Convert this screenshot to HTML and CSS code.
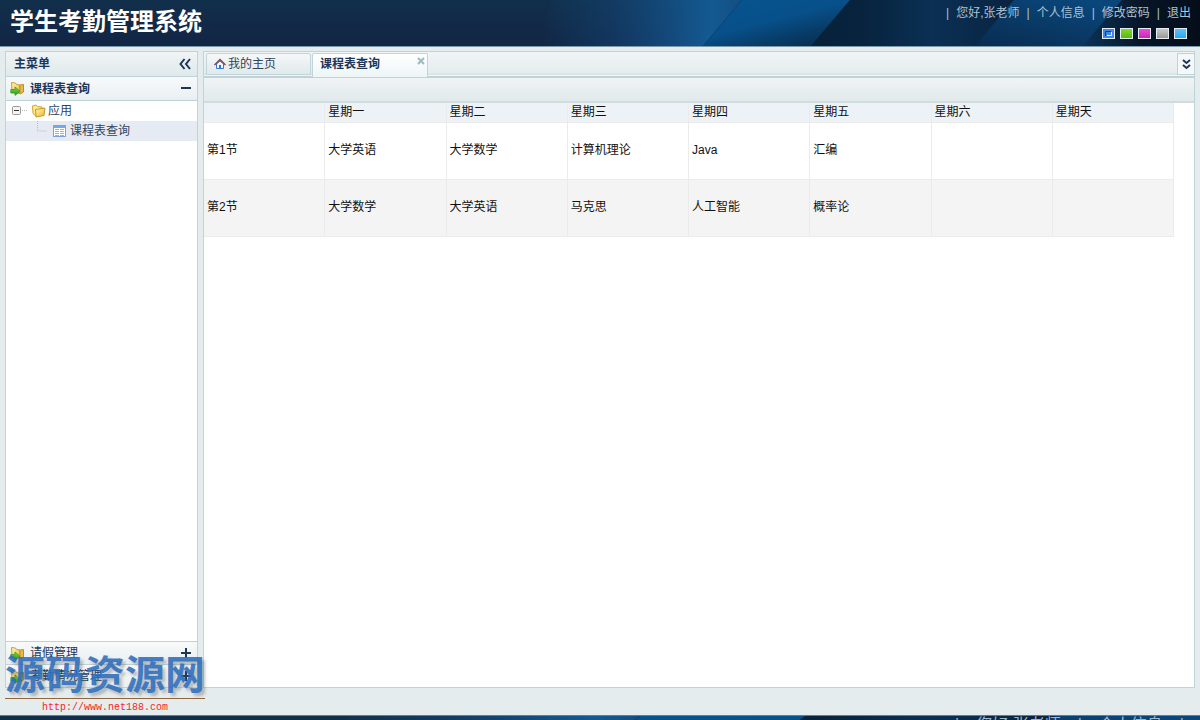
FILE: index.html
```html
<!DOCTYPE html>
<html lang="zh-CN">
<head>
<meta charset="utf-8">
<title>学生考勤管理系统</title>
<link rel="stylesheet" href="styles.css">
</head>
<body>
<svg class="defs" aria-hidden="true">
  <defs>
    <linearGradient id="base" x1="0" y1="0" x2="0" y2="1"><stop offset="0" stop-color="#112f4b"/><stop offset="1" stop-color="#122544"/></linearGradient>
    <linearGradient id="glow"><stop offset="0" stop-color="#14598f" stop-opacity="0"/><stop offset=".35" stop-color="#14508a" stop-opacity=".35"/><stop offset=".85" stop-color="#145a92"/><stop offset="1" stop-color="#124e82"/></linearGradient>
    <linearGradient id="blue" x1="0" y1="0" x2=".8" y2="1"><stop offset="0" stop-color="#075490"/><stop offset=".5" stop-color="#07508a"/><stop offset="1" stop-color="#082c4c"/></linearGradient>
    <linearGradient id="dark"><stop offset="0" stop-color="#07213a"/><stop offset=".25" stop-color="#08233e"/><stop offset=".6" stop-color="#0a3054"/><stop offset="1" stop-color="#0a2340"/></linearGradient>
    <linearGradient id="mid" x1="0" y1="1" x2=".7" y2="0"><stop offset="0" stop-color="#092c50"/><stop offset="1" stop-color="#0a467a"/></linearGradient>
    <linearGradient id="night"><stop offset="0" stop-color="#0a3357"/><stop offset=".5" stop-color="#071527"/><stop offset="1" stop-color="#050d1a"/></linearGradient>
    <linearGradient id="fold" x1="0" x2="1" y2="1"><stop offset="0" stop-color="#fff7b5"/><stop offset="1" stop-color="#e9b72f"/></linearGradient>
    <linearGradient id="arrow" x1="0" x2="0" y2="1"><stop offset="0" stop-color="#7fdc45"/><stop offset="1" stop-color="#229516"/></linearGradient>
    <g id="banner">
      <rect width="1200" height="46" fill="url(#base)"/>
      <path d="M550 0H742L703 46H540Z" fill="url(#glow)"/>
      <path d="M742 0H850L811 46H703Z" fill="url(#blue)"/>
      <path d="M850 0H1014L975 46H811Z" fill="url(#dark)"/>
      <path d="M1014 0H1122L1083 46H975Z" fill="url(#mid)"/>
      <path d="M1122 0H1200V46H1083Z" fill="url(#night)"/>
      <path d="M742 0L703 46" stroke="#0f4473" stroke-width="1"/>
    </g>
    <g id="module">
      <path d="M1.500 1.500l4 .5 1 1.500 3.500.5v8.500l-8-1z" fill="url(#fold)" stroke="#c9a040"/>
      <path d="M10 4l3.500-.5v7.500l-3.500 2z" fill="#e8bb48" stroke="#c08d24"/>
      <path d="M.8 8.500h4.200V6l5 4.200-5 4.200V12H.8z" fill="url(#arrow)" stroke="#3b9a2a" stroke-width=".8"/>
    </g>
  </defs>
</svg>

<header class="header">
  <svg class="banner" viewBox="0 0 1200 46" preserveAspectRatio="none" aria-hidden="true"><use href="#banner"/></svg>
  <h1 class="title">学生考勤管理系统</h1>
  <div class="tools">
    <nav class="links"><i>|</i><span>您好,张老师</span><i>|</i><a href="#info">个人信息</a><i>|</i><a href="#password">修改密码</a><i>|</i><a href="#logout">退出</a></nav>
    <div class="skins">
      <button class="skin blue" aria-label="蓝色"><svg width="11" height="9"><path d="M2.500 7V2.500H8" fill="none" stroke="#143a70"/><path d="M4 6.500h4.500V3" fill="none" stroke="#e6f2ff"/></svg></button><button class="skin green" aria-label="绿色"></button><button class="skin pink" aria-label="粉色"></button><button class="skin gray" aria-label="灰色"></button><button class="skin sky" aria-label="天蓝"></button>
    </div>
  </div>
</header>

<main class="layout">
  <aside class="side">
    <div class="side-head"><span>主菜单</span>
      <button class="plain" aria-label="收起"><svg width="12" height="12" viewBox="0 0 12 12"><path d="M5.500 1L1.500 6l4 5M11 1L7 6l4 5" class="ink"/></svg></button></div>
    <button class="module"><svg width="15" height="15"><use href="#module"/></svg><span>课程表查询</span><svg width="11" height="11"><path d="M0 5h10" class="ink"/></svg></button>
    <div class="tree">
      <div class="node">
        <svg width="20" height="20"><rect x="1.500" y="5.500" width="8" height="8" rx="1" fill="#f4f4f4" stroke="#9a9a9a"/><path d="M3 9.500h5" stroke="#333"/><path d="M11 9.500h5" stroke="#bbb" stroke-dasharray="1 1"/></svg>
        <svg width="16" height="16"><path d="M1.500 3l3.500-1 1.500 1.500 4.500 .5v8l-6 1-3-2.500z" fill="#fbeb8c" stroke="#cfa53a"/><path d="M4.500 6.500l9.500-1.500-1 7.500-8 1.500z" fill="url(#fold)" stroke="#cb9628"/></svg>
        <span>应用</span>
      </div>
      <div class="node leaf">
        <svg width="16" height="20"><path d="M5.500 0v10h9" fill="none" stroke="#bbb" stroke-dasharray="1 1"/></svg>
        <svg width="14" height="13"><rect x=".5" y=".5" width="12" height="11" fill="#fff" stroke="#7aa3df"/><path d="M1 2h11" stroke="#79a8ea" stroke-width="2"/><path d="M2 4.500h4m1 0h4M2 6.500h4m1 0h4M2 8.500h4m1 0h4M2 10.500h4m1 0h4" stroke="#8db5ea"/></svg>
        <a href="#schedule">课程表查询</a>
      </div>
    </div>
    <button class="module low"><svg width="15" height="15"><use href="#module"/></svg><span>请假管理</span><svg width="11" height="11"><path d="M0 5h10M5 0v10" class="ink"/></svg></button>
    <button class="module low"><svg width="15" height="15"><use href="#module"/></svg><span>考勤情况管理</span><svg width="11" height="11"><path d="M0 5h10M5 0v10" class="ink"/></svg></button>
  </aside>

  <section class="content">
    <div class="tabs">
      <button class="tab home"><svg width="12" height="12"><path d="M2.500 6v4.500h7V6L6 3z" fill="#eef5ff" stroke="#3a76ca"/><path d="M.5 7L6 1.500 11.500 7" fill="none" stroke="#7d4048" stroke-width="1.300"/><path d="M5 7h2v4H5z" fill="#2f74d8"/></svg><span>我的主页</span></button>
      <div class="tab active"><span>课程表查询</span><button class="plain close" aria-label="关闭"><svg width="8" height="8"><path d="M1 1l6 6M7 1L1 7" stroke="#9bbac2" stroke-width="2"/></svg></button></div>
      <button class="more" aria-label="更多"><svg width="9" height="11"><path d="M1 1l3.500 3L8 1M1 6l3.500 3L8 6" class="ink"/></svg></button>
    </div>
    <div class="toolbar"></div>
    <table class="grid">
      <thead><tr><th></th><th>星期一</th><th>星期二</th><th>星期三</th><th>星期四</th><th>星期五</th><th>星期六</th><th>星期天</th></tr></thead>
      <tbody>
        <tr><td>第1节</td><td>大学英语</td><td>大学数学</td><td>计算机理论</td><td>Java</td><td>汇编</td><td></td><td></td></tr>
        <tr><td>第2节</td><td>大学数学</td><td>大学英语</td><td>马克思</td><td>人工智能</td><td>概率论</td><td></td><td></td></tr>
      </tbody>
    </table>
  </section>
</main>

<footer class="next">
  <svg class="banner" viewBox="322 0 787 46" preserveAspectRatio="none" aria-hidden="true"><use href="#banner"/></svg>
  <div class="next-links"><i>|</i><span>您好,张老师</span><i>|</i><span>个人信息</span><i>|</i></div>
</footer>

<div class="watermark"><div class="mark">源码资源网</div><div class="url">http://www.net188.com</div></div>
</body>
</html>
```
FILE: styles.css
```css
* { box-sizing: border-box; }
body {
  margin: 0;
  height: 100vh;
  display: flex;
  flex-direction: column;
  overflow: hidden;
  background: #e4ecee;
  color: #222;
  font: 12px/16px "Liberation Sans", "Noto Sans CJK SC", sans-serif;
}
button { font: inherit; color: inherit; border: 0; padding: 0; background: none; }
a { color: inherit; text-decoration: none; }
i { font-style: normal; }
svg { display: block; flex: none; }
.defs { position: absolute; width: 0; height: 0; }
.ink { fill: none; stroke: #1d3557; stroke-width: 2; }
.plain { display: flex; }

.header {
  position: relative;
  flex: none;
  display: flex;
  justify-content: space-between;
  height: 47px;
  overflow: hidden;
  border-bottom: 1px solid #7d9aab;
}
.banner { position: absolute; top: 0; left: 0; width: 100%; height: 46px; }
.title {
  position: relative;
  margin: 0;
  padding: 5px 0 0 10px;
  color: #fff;
  font-size: 24px;
  line-height: 34px;
}
.tools {
  position: relative;
  display: flex;
  flex-direction: column;
  align-items: flex-end;
  gap: 7px;
  padding: 5px 9px 0 0;
}
.links { display: flex; gap: 7px; color: #aac3d6; }
.skins { display: flex; gap: 5px; padding-right: 4px; }
.skin { width: 13px; height: 11px; border: 1px solid #e4edf3; }
.blue { background: #3f87e6; }
.green { background: linear-gradient(#83dc25, #55b916); }
.pink { background: linear-gradient(#ee4bd8, #c729b4); }
.gray { background: linear-gradient(#c9c9c9, #999); }
.sky { background: linear-gradient(#58c4fb, #2aa5ee); }

.layout { flex: 1; display: flex; gap: 5px; min-height: 0; padding: 4px 5px 27px; }
.side {
  flex: none;
  width: 193px;
  display: flex;
  flex-direction: column;
  border: 1px solid #c0d3d9;
  background: #fff;
}
.side-head {
  display: flex;
  align-items: center;
  justify-content: space-between;
  height: 25px;
  padding: 0 6px 0 8px;
  border-bottom: 1px solid #bdd3d9;
  background: linear-gradient(#f0f4f5, #dfe9eb);
  color: #1d3557;
  font-weight: bold;
}
.module {
  display: flex;
  align-items: center;
  gap: 5px;
  height: 24px;
  padding: 0 5px 0 4px;
  border-bottom: 1px solid #bdd3d9;
  background: linear-gradient(#f8fafa, #e9eff1);
  color: #1d3557;
  font-weight: bold;
  text-align: left;
}
.module span { flex: 1; }
.low { height: 23px; border-top: 1px solid #bdd3d9; border-bottom: 0; font-weight: normal; }
.tree { flex: 1; color: #31435a; }
.node { display: flex; align-items: center; height: 20px; padding-left: 5px; }
.node span { padding-left: 1px; }
.leaf { padding-left: 26px; background: #e6ebf3; }
.leaf svg + svg { margin: 0 3px 0 5px; }

.content { flex: 1; min-width: 0; border: 1px solid #c0d3d9; background: #fff; }
.tabs {
  display: flex;
  gap: 1px;
  height: 26px;
  padding: 1px 0 0 2px;
  border-bottom: 2px solid #bfd2d7;
  background: linear-gradient(#eff4f5, #e6edef 21px, #c9dadd 22px, #edf5f6 23px);
  color: #31435a;
}
.tab { display: flex; height: 22px; padding: 2px 7px; border: 1px solid #c2d4da; border-radius: 2px 2px 0 0; background: linear-gradient(#f5f8f8, #e0e9ec); }
.home { width: 105px; align-items: center; gap: 2px; }
.active { width: 116px; height: 24px; justify-content: space-between; padding-right: 2px; border-bottom: 0; background: linear-gradient(#fff, #edf5f6); color: #1d3557; font-weight: bold; }
.close { padding-top: 1px; height: 9px; }
.more { display: flex; align-items: center; justify-content: center; width: 17px; height: 22px; margin-left: auto; border: 1px solid #bfd2d7; border-right: 0; background: #f4f8f9; }
.toolbar { height: 25px; border-bottom: 2px solid #cfdde1; background: linear-gradient(#f0f4f5, #e1e9eb); }
.grid { width: 98%; table-layout: fixed; border-collapse: separate; border-spacing: 0; color: #111; }
th, td { padding: 0 3px; border: solid #ebebeb; border-width: 0 1px 1px 0; text-align: left; font-weight: normal; }
th { height: 20px; line-height: 19px; background: #edf2f6; }
td { height: 57px; padding-bottom: 3px; }
tbody tr:nth-child(2) { background: #f4f4f4; }

.next { position: relative; flex: none; height: 5px; overflow: hidden; border-top: 1px solid #587f9a; }
.next-links { position: relative; display: flex; justify-content: flex-end; gap: 17px; padding: 1px 16px 0 0; color: #9db8cc; font-size: 16px; }

.watermark { position: absolute; left: 5px; bottom: 4px; width: 200px; text-align: center; }
.mark {
  height: 45px;
  border-bottom: 1px solid #93653f;
  color: rgba(45, 110, 190, .88);
  font-size: 40px;
  font-weight: bold;
  line-height: 42px;
  text-shadow: 3px 3px 3px rgba(80, 80, 80, .35);
}
.url { color: #f22; font: 10px/17px "Liberation Mono", monospace; }
```
